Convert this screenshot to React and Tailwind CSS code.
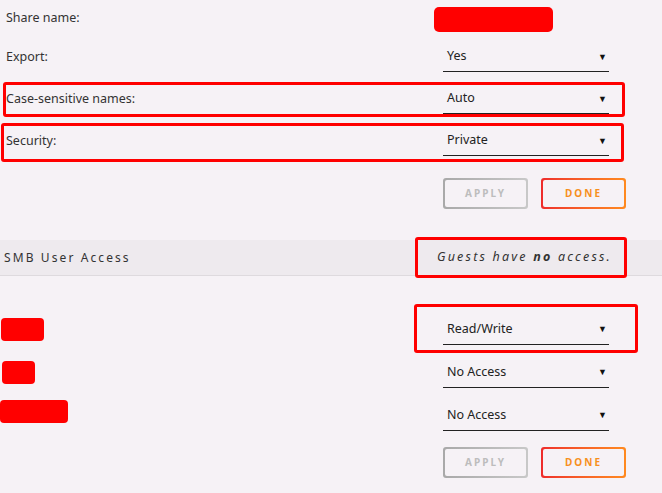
import React from "react";

const font = { fontFamily: '"Noto Sans", "Open Sans", sans-serif' };

function Select({ value }) {
    return (
        <div className="ml-auto mr-[53px] w-[166px] h-[30px] flex items-center border-b border-[#222] pl-[4px] pr-[2px]">
            <span className="text-[12.5px] text-[#222]">{value}</span>
            <span className="ml-auto text-[9px] text-[#111]">▼</span>
        </div>
    );
}

function Buttons() {
    return (
        <div className="flex justify-end gap-[13px] mr-[36px]">
            <div className="p-[2px] rounded-[3px] bg-gradient-to-r from-[#a9a9a9] to-[#c8c8c8]">
                <div className="w-[81px] h-[27px] rounded-[2px] bg-[#f6f2f6] flex items-center justify-center text-[10px] font-bold tracking-[2px] text-[#bdbdbd]">
                    APPLY
                </div>
            </div>
            <div className="p-[2px] rounded-[3px] bg-gradient-to-r from-[#ee2b2b] to-[#ff8a1f]">
                <div className="w-[81px] h-[27px] rounded-[2px] bg-[#f6f2f6] flex items-center justify-center text-[10px] font-bold tracking-[2px] text-[#f7901e]">
                    DONE
                </div>
            </div>
        </div>
    );
}

function Mark({ className }) {
    return <div className={`absolute border-[3px] border-[#ff0000] rounded-[3px] pointer-events-none ${className}`} />;
}

export default function App() {
    const users = [
        { cls: "w-[43px] ml-[1px]", access: "Read/Write" },
        { cls: "w-[33px] ml-[2px]", access: "No Access" },
        { cls: "w-[68px] ml-0 mb-[8px]", access: "No Access" },
    ];

    return (
        <div className="relative w-[662px] h-[493px] bg-[#f6f2f6] overflow-hidden" style={font}>
            <div className="h-[36px] flex items-center pl-[6px]">
                <span className="text-[12.5px] text-[#333]">Share name:</span>
                <div className="ml-auto mr-[109px] mt-[2px] w-[119px] h-[25px] rounded-[5px] bg-[#ff0000]" />
            </div>
            {[
                ["Export:", "Yes"],
                ["Case-sensitive names:", "Auto"],
                ["Security:", "Private"],
            ].map(([label, value]) => (
                <div key={label} className="h-[42px] flex items-center pl-[6px]">
                    <span className="text-[12.5px] text-[#333]">{label}</span>
                    <Select value={value} />
                </div>
            ))}

            <div className="mt-[16px]">
                <Buttons />
            </div>

            <div className="mt-[31px] h-[36px] bg-[#eeeaee] border-b border-[#dedade] flex items-center pl-[4px] pr-[50px]">
                <span className="text-[12px] tracking-[2.1px] text-[#333]">SMB User Access</span>
                <span className="ml-auto text-[12.5px] italic tracking-[2.2px] text-[#333]">
                    Guests have <b>no</b> access.
                </span>
            </div>

            <div className="mt-[32px]">
                {users.map((u, i) => (
                    <div key={i} className="h-[43px] flex items-center">
                        <div className={`${u.cls} h-[23px] rounded-[4px] bg-[#ff0000]`} />
                        <Select value={u.access} />
                    </div>
                ))}
            </div>

            <div className="mt-[10px]">
                <Buttons />
            </div>

            <Mark className="left-[3px] top-[82px] w-[622px] h-[35px]" />
            <Mark className="left-[1px] top-[123px] w-[623px] h-[39px]" />
            <Mark className="left-[415px] top-[237px] w-[212px] h-[41px]" />
            <Mark className="left-[414px] top-[304px] w-[224px] h-[49px]" />
        </div>
    );
}
